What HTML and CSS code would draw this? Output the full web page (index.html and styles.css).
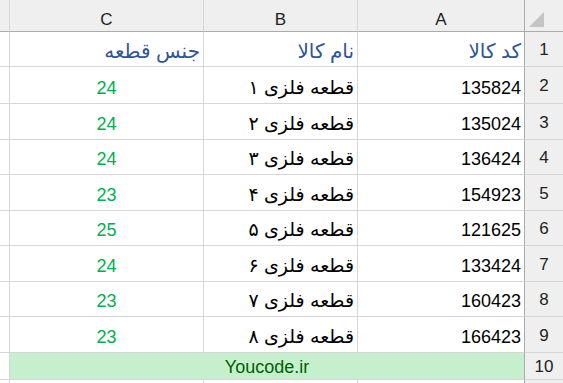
FILE: index.html
```html
<!DOCTYPE html>
<html lang="fa">
<head>
<meta charset="utf-8">
<link rel="stylesheet" href="styles.css">
</head>
<body>
<div class="sheet" dir="rtl">
  <div class="hd corner"><span class="tri"></span></div>
  <div class="hd col">A</div>
  <div class="hd col">B</div>
  <div class="hd col">C</div>
  <div class="hd stub"></div>

  <div class="rh">1</div>
  <div class="c title">کد کالا</div>
  <div class="c title">نام کالا</div>
  <div class="c title">جنس قطعه</div>
  <div class="c stub"></div>

  <div class="rh">2</div>
  <div class="c num">135824</div>
  <div class="c fa">قطعه فلزی ۱</div>
  <div class="c grn">24</div>
  <div class="c stub"></div>

  <div class="rh">3</div>
  <div class="c num">135024</div>
  <div class="c fa">قطعه فلزی ۲</div>
  <div class="c grn">24</div>
  <div class="c stub"></div>

  <div class="rh">4</div>
  <div class="c num">136424</div>
  <div class="c fa">قطعه فلزی ۳</div>
  <div class="c grn">24</div>
  <div class="c stub"></div>

  <div class="rh">5</div>
  <div class="c num">154923</div>
  <div class="c fa">قطعه فلزی ۴</div>
  <div class="c grn">23</div>
  <div class="c stub"></div>

  <div class="rh">6</div>
  <div class="c num">121625</div>
  <div class="c fa">قطعه فلزی ۵</div>
  <div class="c grn">25</div>
  <div class="c stub"></div>

  <div class="rh">7</div>
  <div class="c num">133424</div>
  <div class="c fa">قطعه فلزی ۶</div>
  <div class="c grn">24</div>
  <div class="c stub"></div>

  <div class="rh">8</div>
  <div class="c num">160423</div>
  <div class="c fa">قطعه فلزی ۷</div>
  <div class="c grn">23</div>
  <div class="c stub"></div>

  <div class="rh">9</div>
  <div class="c num">166423</div>
  <div class="c fa">قطعه فلزی ۸</div>
  <div class="c grn">23</div>
  <div class="c stub"></div>

  <div class="rh">10</div>
  <div class="c merged" dir="ltr">Youcode.ir</div>
  <div class="c stub"></div>

  <div class="rh"></div>
  <div class="c"></div>
  <div class="c"></div>
  <div class="c"></div>
  <div class="c stub"></div>
</div>
</body>
</html>
```

FILE: styles.css
```css
* { box-sizing: border-box; }
html, body { margin: 0; padding: 0; background: #fff; overflow: hidden; }

.sheet {
  display: grid;
  grid-template-columns: 39px 167px 154px 194px 9px;
  grid-template-rows: 32px 35px 37px 36px 35px 36px 35px 36px 35px 36px 27px 20px;
  width: 563px;
  height: 383px;
  font-family: "Liberation Sans", "DejaVu Sans", Arial, sans-serif;
  font-size: 18px;
  color: #000;
}

.hd {
  background: #efefef;
  border-bottom: 1px solid #ababab;
  border-left: 1px solid #d6d6d6;
  display: flex;
  align-items: center;
  justify-content: center;
  color: #222;
  font-size: 17px;
  padding-top: 8px;
}
.corner { border-left: 1px solid #ababab; position: relative; }
.tri {
  position: absolute;
  right: 19px;
  bottom: 4px;
  width: 0;
  height: 0;
  border-bottom: 15px solid #c4c4c4;
  border-left: 15px solid transparent;
}
.hd.stub { border-left: none; }

.rh {
  background: #efefef;
  border-left: 1px solid #ababab;
  border-bottom: 1px solid #d6d6d6;
  color: #222;
  font-size: 17px;
  display: flex;
  align-items: center;
  justify-content: center;
  padding-top: 2px;
}

.c {
  border-left: 1px solid #d6d6d6;
  border-bottom: 1px solid #d6d6d6;
  display: flex;
  align-items: flex-end;
  padding: 0 3px 5px 3px;
  line-height: 20px;
  white-space: nowrap;
}
.c.stub { border-left: none; }

.title { color: #2f5597; font-size: 20px; }
.fa { font-size: 19px; }
.num, .fa { justify-content: flex-start; }
.grn { color: #00b050; justify-content: center; }

.merged {
  grid-column: 2 / 5;
  background: #c6efce;
  color: #006100;
  justify-content: center;
  padding-bottom: 2px;
}
```
